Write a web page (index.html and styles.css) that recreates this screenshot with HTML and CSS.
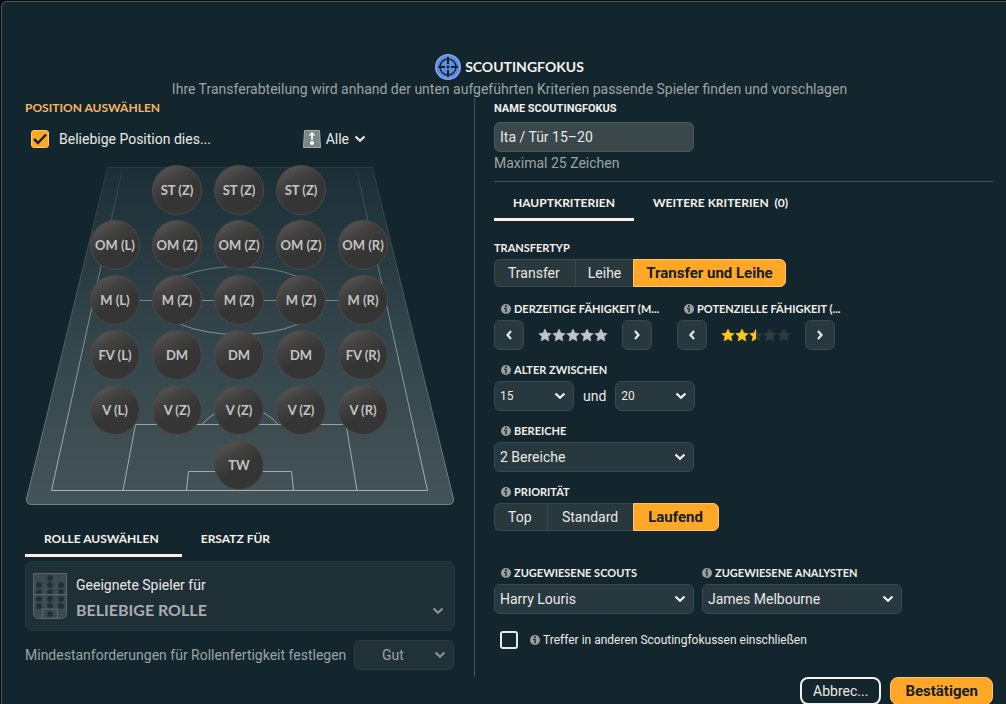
FILE: index.html
```html
<!DOCTYPE html>
<html lang="de">
<head>
<meta charset="utf-8">
<meta name="viewport" content="width=device-width, initial-scale=1">
<title>Scoutingfokus</title>
<link rel="stylesheet" href="styles.css">
</head>
<body>
<svg class="sprite" aria-hidden="true">
  <symbol id="chevron" viewBox="0 0 12 8"><path d="M1.500 1.500 6 5.700l4.500-4.200" fill="none" stroke="currentColor" stroke-width="2.200"/></symbol>
  <symbol id="arrow-left" viewBox="0 0 8 12"><path d="M6 2 2.500 6 6 10" fill="none" stroke="currentColor" stroke-width="2.200"/></symbol>
  <symbol id="arrow-right" viewBox="0 0 8 12"><path d="M2 2 5.500 6 2 10" fill="none" stroke="currentColor" stroke-width="2.200"/></symbol>
  <symbol id="info" viewBox="0 0 10 10"><circle cx="5" cy="5" r="5" fill="#9ba09e"/><path d="M4 1.300h2v1.500H4zM3 3.700h3v4.600H4V5H3z" fill="#14262d"/><path d="M4.700 4.300h.6v3.600h-.6z" fill="#9ba09e"/></symbol>
  <symbol id="star" viewBox="0 0 14 14"><path d="m7 1 1.900 4.100 4.300.5-3.200 3 .9 4.400L7 10.800 3.100 13 4 8.600l-3.200-3 4.300-.5z" fill="currentColor" stroke="currentColor" stroke-width=".6"/></symbol>
</svg>

<main class="dialog">
  <header class="header">
    <h1 class="title">
      <svg class="title-icon" viewBox="0 0 26 26" aria-hidden="true">
        <circle cx="13" cy="13" r="13" fill="#7ea5ee"/><circle cx="13" cy="13" r="11.500" fill="#5d8ce0"/>
        <g fill="none" stroke="#10222e"><circle cx="13" cy="13" r="8" stroke-width="1.500"/><path d="M13 3v7M13 16v7M3 13h7M16 13h7" stroke-width="2"/></g>
        <circle cx="13" cy="13" r="1.500" fill="#10222e"/>
      </svg>
      SCOUTINGFOKUS
    </h1>
    <p class="subtitle">Ihre Transferabteilung wird anhand der unten aufgeführten Kriterien passende Spieler finden und vorschlagen</p>
  </header>

  <div class="columns">
    <section class="left">
      <h2 class="section-title">POSITION AUSWÄHLEN</h2>
      <div class="position-row">
        <label class="check">
          <span class="tick"><input type="checkbox" class="box" checked><svg class="tick-mark" viewBox="0 0 18 18" aria-hidden="true"><path d="m3 9 4 4 8-8.500" fill="none" stroke="#14262d" stroke-width="2.500"/></svg></span>
          Beliebige Position dies...
        </label>
        <button class="filter" type="button">
          <svg class="filter-icon" viewBox="0 0 18 18" aria-hidden="true"><path d="M1.500.5h15l1 17H.5z" fill="#7c8686" stroke="#a4abaa"/><path d="M9 10V3M6.500 5.500 9 3l2.500 2.500" fill="none" stroke="#fff" stroke-width="1.600"/><circle cx="9" cy="13" r="2" fill="#fff"/></svg>
          Alle
          <svg class="chevron" aria-hidden="true"><use href="#chevron"/></svg>
        </button>
      </div>

      <div class="pitch">
        <svg class="field" viewBox="0 0 430 340" preserveAspectRatio="none" aria-hidden="true">
          <defs>
            <linearGradient id="grass" x1="0" y1="0" x2="0" y2="1"><stop offset="0" stop-color="#1d2f36"/><stop offset=".5" stop-color="#33454b"/><stop offset="1" stop-color="#445357"/></linearGradient>
            <linearGradient id="edge" x1="0" y1="0" x2="0" y2="1"><stop offset="0" stop-color="#2a3b41"/><stop offset="1" stop-color="#768183"/></linearGradient>
            <linearGradient id="chalk" gradientUnits="userSpaceOnUse" x1="0" y1="0" x2="0" y2="326"><stop offset="0" stop-color="#26383e"/><stop offset=".4" stop-color="#7c8786"/><stop offset="1" stop-color="#a9b1af"/></linearGradient>
          </defs>
          <path d="M82.500 2.500h265L428.500 334q.5 5.500-5 5.500h-417q-5.500 0-5-5.500z" fill="url(#grass)" stroke="url(#edge)"/>
          <g fill="none" stroke="url(#chalk)"><path d="M97 6 26.500 325.500h376L332 6M80 135.500h270M98 325.500 110.500 259.500h210.500l11 66M161.500 325.500 163.500 306.500h103L268.500 325.500M177 259.500c19-23 57-23 76 0"/><ellipse cx="214" cy="135.500" rx="82" ry="34"/></g>
        </svg>
        <div class="positions">
          <div class="line"><button class="pos" type="button">ST (Z)</button><button class="pos" type="button">ST (Z)</button><button class="pos" type="button">ST (Z)</button></div>
          <div class="line"><button class="pos" type="button">OM (L)</button><button class="pos" type="button">OM (Z)</button><button class="pos" type="button">OM (Z)</button><button class="pos" type="button">OM (Z)</button><button class="pos" type="button">OM (R)</button></div>
          <div class="line"><button class="pos" type="button">M (L)</button><button class="pos" type="button">M (Z)</button><button class="pos" type="button">M (Z)</button><button class="pos" type="button">M (Z)</button><button class="pos" type="button">M (R)</button></div>
          <div class="line"><button class="pos" type="button">FV (L)</button><button class="pos" type="button">DM</button><button class="pos" type="button">DM</button><button class="pos" type="button">DM</button><button class="pos" type="button">FV (R)</button></div>
          <div class="line"><button class="pos" type="button">V (L)</button><button class="pos" type="button">V (Z)</button><button class="pos" type="button">V (Z)</button><button class="pos" type="button">V (Z)</button><button class="pos" type="button">V (R)</button></div>
          <div class="line"><button class="pos" type="button">TW</button></div>
        </div>
      </div>

      <div class="tabs" role="tablist">
        <button class="tab tab-active" type="button" role="tab" aria-selected="true">ROLLE AUSWÄHLEN</button>
        <button class="tab" type="button" role="tab" aria-selected="false">ERSATZ FÜR</button>
      </div>

      <button class="role-card" type="button">
        <svg class="role-icon" viewBox="0 0 34 46" aria-hidden="true">
          <path d="M.5.5h33v39q0 6-6 6h-21q-6 0-6-6z" fill="#3c4b50" stroke="#5a676b"/>
          <g fill="#222f33" stroke="#4d5a5e" stroke-width=".6"><circle cx="17" cy="5" r="3.500"/><circle cx="6" cy="12" r="3.500"/><circle cx="17" cy="12" r="3.500"/><circle cx="28" cy="12" r="3.500"/><circle cx="6" cy="19" r="3.500"/><circle cx="17" cy="19" r="3.500"/><circle cx="28" cy="19" r="3.500"/><circle cx="6" cy="26" r="3.500"/><circle cx="17" cy="26" r="3.500"/><circle cx="28" cy="26" r="3.500"/><circle cx="6" cy="33" r="3.500"/><circle cx="17" cy="33" r="3.500"/><circle cx="28" cy="33" r="3.500"/><circle cx="17" cy="41" r="3.500"/></g>
          <path d="M0 21.500h34M9.500 45v-9h15v9" fill="none" stroke="#5a676b"/>
        </svg>
        <span class="role-text"><span class="role-caption">Geeignete Spieler für</span><span class="role-name">BELIEBIGE ROLLE</span></span>
        <svg class="chevron" aria-hidden="true"><use href="#chevron"/></svg>
      </button>

      <div class="minimum">
        <label for="minimum">Mindestanforderungen für Rollenfertigkeit festlegen</label>
        <span class="select-wrap minimum-select"><select class="select" id="minimum"><option>Gut</option></select><svg class="chevron" aria-hidden="true"><use href="#chevron"/></svg></span>
      </div>
    </section>

    <section class="right">
      <label class="label label-plain name-label" for="name">NAME SCOUTINGFOKUS</label>
      <input class="text-input" id="name" type="text" value="Ita / Tür 15–20">
      <p class="hint">Maximal 25 Zeichen</p>

      <div class="tabs tabs-right" role="tablist">
        <button class="tab tab-active" type="button" role="tab" aria-selected="true">HAUPTKRITERIEN</button>
        <button class="tab" type="button" role="tab" aria-selected="false">WEITERE KRITERIEN&nbsp; (0)</button>
      </div>

      <div class="fields">
        <div class="field-group">
          <div class="label label-plain">TRANSFERTYP</div>
          <div class="segments"><button class="segment" type="button">Transfer</button><button class="segment" type="button">Leihe</button><button class="segment segment-active" type="button">Transfer und Leihe</button></div>
        </div>

        <div class="pair">
          <div class="field-group ability">
            <div class="label"><svg class="info" aria-hidden="true"><use href="#info"/></svg>DERZEITIGE FÄHIGKEIT (M...</div>
            <div class="stepper">
              <button class="step" type="button" aria-label="Weniger"><svg class="arrow" aria-hidden="true"><use href="#arrow-left"/></svg></button>
              <svg class="stars stars-silver" viewBox="0 0 70 14" aria-hidden="true"><use href="#star" width="14" height="14"/><use href="#star" x="14" width="14" height="14"/><use href="#star" x="28" width="14" height="14"/><use href="#star" x="42" width="14" height="14"/><use href="#star" x="56" width="14" height="14"/></svg>
              <button class="step" type="button" aria-label="Mehr"><svg class="arrow" aria-hidden="true"><use href="#arrow-right"/></svg></button>
            </div>
          </div>
          <div class="field-group ability">
            <div class="label"><svg class="info" aria-hidden="true"><use href="#info"/></svg>POTENZIELLE FÄHIGKEIT (...</div>
            <div class="stepper">
              <button class="step" type="button" aria-label="Weniger"><svg class="arrow" aria-hidden="true"><use href="#arrow-left"/></svg></button>
              <svg class="stars" viewBox="0 0 70 14" aria-hidden="true">
                <clipPath id="half"><path d="M0 0h35v14H0z"/></clipPath>
                <g color="#2f3d43"><use href="#star" x="28" width="14" height="14"/><use href="#star" x="42" width="14" height="14"/><use href="#star" x="56" width="14" height="14"/></g>
                <g color="#fac81e" clip-path="url(#half)"><use href="#star" width="14" height="14"/><use href="#star" x="14" width="14" height="14"/><use href="#star" x="28" width="14" height="14"/></g>
              </svg>
              <button class="step" type="button" aria-label="Mehr"><svg class="arrow" aria-hidden="true"><use href="#arrow-right"/></svg></button>
            </div>
          </div>
        </div>

        <div class="field-group">
          <label class="label" for="age-from"><svg class="info" aria-hidden="true"><use href="#info"/></svg>ALTER ZWISCHEN</label>
          <div class="ages">
            <span class="select-wrap age"><select class="select" id="age-from"><option>15</option></select><svg class="chevron" aria-hidden="true"><use href="#chevron"/></svg></span>
            <label for="age-to">und</label>
            <span class="select-wrap age"><select class="select" id="age-to"><option>20</option></select><svg class="chevron" aria-hidden="true"><use href="#chevron"/></svg></span>
          </div>
        </div>

        <div class="field-group">
          <label class="label" for="areas"><svg class="info" aria-hidden="true"><use href="#info"/></svg>BEREICHE</label>
          <span class="select-wrap wide"><select class="select" id="areas"><option>2 Bereiche</option></select><svg class="chevron" aria-hidden="true"><use href="#chevron"/></svg></span>
        </div>

        <div class="field-group">
          <div class="label"><svg class="info" aria-hidden="true"><use href="#info"/></svg>PRIORITÄT</div>
          <div class="segments segments-even"><button class="segment" type="button">Top</button><button class="segment" type="button">Standard</button><button class="segment segment-active" type="button">Laufend</button></div>
        </div>
      </div>

      <div class="staff">
        <div class="field-group">
          <label class="label" for="scouts"><svg class="info" aria-hidden="true"><use href="#info"/></svg>ZUGEWIESENE SCOUTS</label>
          <span class="select-wrap wide"><select class="select" id="scouts"><option>Harry Louris</option></select><svg class="chevron" aria-hidden="true"><use href="#chevron"/></svg></span>
        </div>
        <div class="field-group">
          <label class="label label-plain" for="analysts"><svg class="info" aria-hidden="true"><use href="#info"/></svg>ZUGEWIESENE ANALYSTEN</label>
          <span class="select-wrap wide"><select class="select" id="analysts"><option>James Melbourne</option></select><svg class="chevron" aria-hidden="true"><use href="#chevron"/></svg></span>
        </div>
      </div>

      <label class="include"><input class="box" type="checkbox"><span class="include-text"><svg class="info" aria-hidden="true"><use href="#info"/></svg>Treffer in anderen Scoutingfokussen einschließen</span></label>
    </section>
  </div>

  <footer class="footer">
    <button class="btn btn-outline" type="button">Abbrec...</button>
    <button class="btn btn-primary" type="button">Bestätigen</button>
  </footer>
</main>
</body>
</html>
```
FILE: styles.css
```css
* { box-sizing: border-box; }
html { background: #060d10; }
body { margin: 0; padding: 1px 0 0 1px; overflow: hidden; height: 100vh; color: #e9e9e7; font: 14px/18px Roboto, "Liberation Sans", sans-serif; }
button, input, select { font: inherit; color: inherit; margin: 0; }
button, select { cursor: pointer; }
h1, h2, p { margin: 0; }
.sprite { display: none; }

.dialog { min-height: 100vh; padding: 52px 12px 0 23px; background: #14262d; border: solid #4b585c; border-width: 1px 0 0 1px; border-top-left-radius: 6px; }
.header { text-align: center; }
.title { display: flex; align-items: center; justify-content: center; gap: 4px; font: 700 14px/26px Lato, sans-serif; color: #f5f2ee; }
.title-icon { width: 26px; height: 26px; }
.subtitle { color: #9ca3a4; }

.columns { display: grid; grid-template-columns: minmax(0, 450px) minmax(0, 1fr); padding-right: 1px; }
.left { padding-right: 19px; border-right: 1px solid #445156; }
.right { padding: 0 0 28px 19px; }
.section-title { font: 700 12px/20px Lato, sans-serif; color: #f3b663; }

.position-row { display: flex; align-items: center; justify-content: space-between; padding: 12px 89px 17px 6px; }
.check { display: flex; align-items: center; gap: 10px; }
.tick { display: grid; }
.tick > * { grid-area: 1 / 1; }
.tick-mark { width: 18px; height: 18px; pointer-events: none; }
.box { appearance: none; width: 18px; height: 18px; margin: 0; border: 2px solid #e9e7e3; border-radius: 3px; }
.box:checked { background: #ffa726; border: 1px solid #ffc473; }
.filter { display: flex; align-items: center; gap: 5px; padding: 0; border: 0; background: none; }
.filter-icon { width: 18px; height: 18px; }
.chevron { width: 12px; height: 8px; flex: none; }

.pitch { display: grid; }
.pitch > * { grid-area: 1 / 1; }
.field { width: 100%; height: 340px; }
.positions { display: flex; flex-direction: column; gap: 5px; padding-right: 2px; }
.line { display: flex; justify-content: center; gap: 12px; }
.pos { width: 50px; height: 50px; padding: 0; border: 1px solid #4a4a4a; border-radius: 50%; background: linear-gradient(150deg, #5f5d5b 0%, #434241 30%, #353535 55%); color: #c3c3c2; font: 700 13px/18px Lato, sans-serif; white-space: nowrap; }

.tabs { display: flex; padding-top: 17px; }
.tab { border: 0; border-bottom: 3px solid transparent; background: none; font: 700 12px/18px Lato, sans-serif; color: #f5f2ee; }
.left .tab { padding: 8px 23px 6px 19px; }
.tab-active { border-color: #fcf1ea; }

.role-card { display: flex; align-items: flex-start; width: 100%; margin-top: 4px; padding: 11px 10px 8px 7px; border: 1px solid #26373d; border-radius: 8px; background: #1e2f36; text-align: left; }
.role-icon { width: 34px; height: 46px; }
.role-text { display: grid; flex: 1; padding: 2px 0 0 9px; gap: 3px; }
.role-caption { line-height: 20px; }
.role-name { font: 700 16px/24px Lato, sans-serif; color: #a9acb0; }
.role-card .chevron { align-self: flex-end; margin-bottom: 7px; color: #8c9496; }

.minimum { display: flex; align-items: center; justify-content: space-between; padding: 9px 1px 0 0; color: #9ca3a4; }
.select-wrap { display: grid; align-items: center; }
.select-wrap > * { grid-area: 1 / 1; }
.select-wrap .chevron { justify-self: end; margin-right: 8px; color: #f5f2ee; pointer-events: none; }
.select { appearance: none; width: 100%; height: 30px; padding: 0 24px 0 5px; border: 1px solid #3a494f; border-radius: 6px; background: #28383f; }
.minimum-select { width: 100px; }
.minimum-select .select { padding-left: 27px; background: #203138; border-color: #2d3d43; }
.minimum-select .chevron { color: #8c9496; }

.label { display: flex; align-items: center; gap: 3px; padding-left: 7px; font: 700 11px/14px Lato, sans-serif; color: #f0efec; white-space: nowrap; }
.label-plain { padding-left: 0; }
.info { width: 10px; height: 10px; flex: none; }
.name-label { padding-top: 2px; font: 700 11px/18px Roboto, sans-serif; }
.text-input { width: 200px; height: 30px; margin-top: 4px; padding: 0 5px; border: 1px solid #4c5959; border-radius: 6px; background: #3b484b; }
.hint { padding: 2px 0 9px; border-bottom: 1px solid #445156; color: #9ca3a4; }
.tabs-right { padding-top: 3px; }
.tabs-right .tab { padding: 9px 19px 6px; }

.fields { display: grid; gap: 13px; padding-top: 20px; }
.field-group { display: grid; gap: 4px; justify-items: start; }
.segments { display: flex; padding-bottom: 2px; }
.segment { height: 28px; padding: 0 12px; border: 1px solid #3a494f; border-right-width: 0; background: #28383d; }
.segment:first-child { border-radius: 6px 0 0 6px; padding: 0 15px 0 13px; }
.segment-active { border: 1px solid #ffc473; border-radius: 0 6px 6px 0; background: #ffa726; color: #14202a; font-size: 15px; font-weight: 700; }
.segments-even .segment + .segment { width: 86px; }
.pair { display: flex; gap: 25px; }
.stepper { display: flex; align-items: center; gap: 14px; }
.step { display: grid; place-items: center; width: 30px; height: 30px; padding: 0; border: 1px solid #3a494f; border-radius: 6px; background: #28383f; }
.arrow { width: 8px; height: 12px; }
.stars { width: 70px; height: 14px; }
.stars-silver { color: #bfc5c9; }
.ability { width: 158px; }
.ages { display: flex; align-items: center; gap: 9px; }
.age { width: 80px; }
.age .select { font-size: 12px; }
.wide { width: 200px; }
.staff { display: flex; gap: 8px; padding-top: 33px; }
.include { display: flex; align-items: center; gap: 12px; padding: 17px 6px 0; font-size: 12px; }
.include-text { display: flex; align-items: center; gap: 3px; }

.footer { display: flex; justify-content: flex-end; gap: 9px; padding-right: 1px; }
.btn { height: 28px; border-radius: 8px; }
.btn-outline { padding: 0 11px; border: 2px solid #f5f2ee; background: none; }
.btn-primary { padding: 0 14px; border: 1px solid #ffc473; background: #ffa726; color: #14202a; font-size: 15px; font-weight: 700; }
```
